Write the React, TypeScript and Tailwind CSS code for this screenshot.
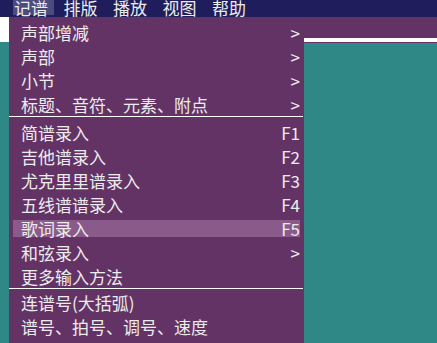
import React from "react";

type MenuItem = { label: string; right?: string; active?: boolean };

// Three groups of the 记谱 dropdown, split by separators
const GROUPS: { pad: string; items: MenuItem[] }[] = [
  {
    pad: "pt-[3px]",
    items: [
      { label: "声部增减", right: ">" },
      { label: "声部", right: ">" },
      { label: "小节", right: ">" },
      { label: "标题、音符、元素、附点", right: ">" },
    ],
  },
  {
    pad: "pt-[3px]",
    items: [
      { label: "简谱录入", right: "F1" },
      { label: "吉他谱录入", right: "F2" },
      { label: "尤克里里谱录入", right: "F3" },
      { label: "五线谱谱录入", right: "F4" },
      { label: "歌词录入", right: "F5", active: true },
      { label: "和弦录入", right: ">" },
      { label: "更多输入方法" },
    ],
  },
  {
    pad: "pt-[1px]",
    items: [{ label: "连谱号(大括弧)" }, { label: "谱号、拍号、调号、速度" }],
  },
];

const TOP_MENU = ["记谱", "排版", "播放", "视图", "帮助"];

export default function App() {
  return (
    <div
      className="relative w-full h-screen overflow-hidden bg-[#2f8886] text-[#ececec] text-[17px]"
      style={{ fontFamily: '"Noto Sans CJK SC", "Noto Sans", sans-serif' }}
    >
      {/* MENU BAR */}
      <div className="h-[17px] bg-[#1f1d5c] flex items-start pl-[13px] gap-[8.5px]">
        {TOP_MENU.map((m, i) => (
          <div
            key={m}
            className={`w-[41px] h-[17px] pl-px leading-[16px] whitespace-nowrap ${
              i === 0 ? "bg-[#4c4b7e] shadow-[inset_0_-2px_0_#1f1d5c]" : ""
            }`}
          >
            {m}
          </div>
        ))}
      </div>

      {/* BACKGROUND WINDOW */}
      <div className="flex h-[21px]">
        <div className="w-[9px] bg-white" />
        <div className="flex-1 bg-[#643366]" />
      </div>
      <div className="h-[4px] bg-white" />
      <div className="h-px bg-[#643366] ml-[9px]" />

      {/* DROPDOWN */}
      <div className="absolute left-[9px] top-[17px] bottom-0 w-[295px] bg-[#643366]">
        {GROUPS.map((group, gi) => (
          <div key={gi}>
            {gi > 0 && <div className="h-px bg-white mr-px" />}
            <div className={group.pad}>
              {group.items.map((item) => (
                <div key={item.label} className="h-6 px-1 flex items-center">
                  <div
                    className={`h-[17px] w-full flex items-center justify-between pl-2 leading-[17px] whitespace-nowrap ${
                      item.active ? "bg-[#8a5b8a]" : ""
                    }`}
                  >
                    <span>{item.label}</span>
                    {item.right && <span>{item.right}</span>}
                  </div>
                </div>
              ))}
            </div>
          </div>
        ))}
      </div>
    </div>
  );
}
